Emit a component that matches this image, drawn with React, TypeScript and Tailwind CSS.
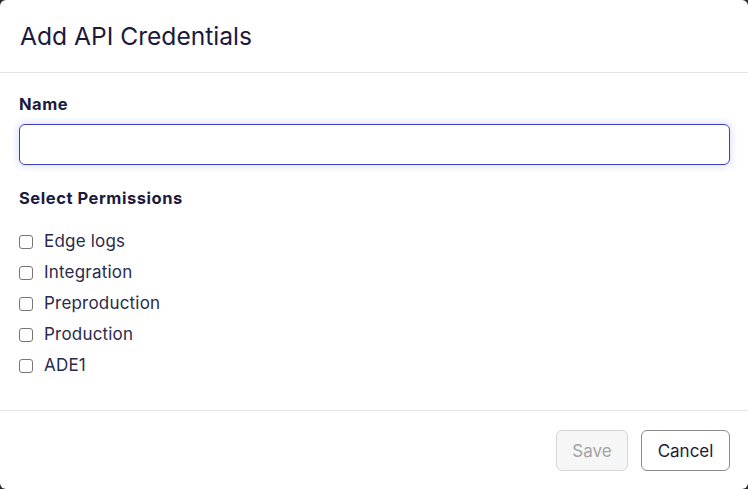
import { useState } from "react";

const permissions = ["Edge logs", "Integration", "Preproduction", "Production", "ADE1"];

export default function App() {
  const [name, setName] = useState("");
  const [checked, setChecked] = useState<string[]>([]);

  const toggle = (p: string) =>
    setChecked((c) => (c.includes(p) ? c.filter((x) => x !== p) : [...c, p]));

  return (
    <div className="h-[489px] w-[748px] bg-[#2a2a2a] font-['Inter',sans-serif] text-[#1b1a3d]">
      <div className="flex h-full flex-col rounded-md bg-white">
        <div className="flex h-[73px] items-center border-b border-[#e3e3e3] px-5">
          <h2 className="text-[24.6px] leading-none">Add API Credentials</h2>
        </div>

        <div className="flex flex-1 flex-col px-[19px] pt-[21px]">
          <label className="text-[16.5px] font-bold leading-5 tracking-[0.5px]">Name</label>
          <input
            value={name}
            onChange={(e) => setName(e.target.value)}
            className="mt-[10px] h-[41px] w-[711px] rounded-md border border-[#3a3fc0] px-3 text-[16px] shadow-[0_0_6px_2px_rgba(90,100,230,0.18)] outline-none"
          />
          <div className="mt-[23px] text-[16.5px] font-bold leading-5 tracking-[0.55px]">Select Permissions</div>
          <div className="mt-[18px] flex flex-col">
            {permissions.map((p) => (
              <label key={p} className="flex h-[31px] items-center gap-[11px]">
                <input
                  type="checkbox"
                  checked={checked.includes(p)}
                  onChange={() => toggle(p)}
                  className="h-[14px] w-[14px] appearance-none rounded-[3px] border border-[#767676] bg-white checked:bg-[#3a3fc0]"
                />
                <span className="text-[17px] tracking-[0.2px] text-[#2b2a4a]">{p}</span>
              </label>
            ))}
          </div>
        </div>

        <div className="flex h-[79px] items-center justify-end gap-[13px] border-t border-[#e3e3e3] px-[18px]">
          <button
            disabled
            className="h-[41px] w-[72px] rounded-md border border-[#d6d6d6] bg-[#f6f6f6] pt-[3px] text-[17px] text-[#a3a3a3]"
          >
            Save
          </button>
          <button className="h-[41px] w-[89px] rounded-md border border-[#8a8a8a] bg-white pt-[3px] text-[17px] text-[#1b1a3d]">
            Cancel
          </button>
        </div>
      </div>
    </div>
  );
}
